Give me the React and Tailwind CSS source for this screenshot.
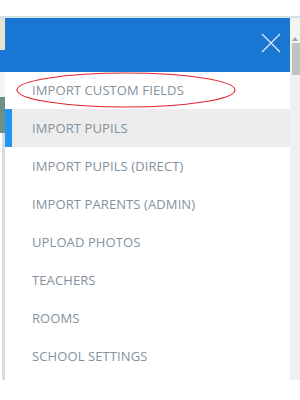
import React from "react";

const items = [
  "IMPORT CUSTOM FIELDS",
  "IMPORT PUPILS",
  "IMPORT PUPILS (DIRECT)",
  "IMPORT PARENTS (ADMIN)",
  "UPLOAD PHOTOS",
  "TEACHERS",
  "ROOMS",
  "SCHOOL SETTINGS",
];

export default function App() {
  return (
    <div className="relative w-[300px] h-[400px] bg-white overflow-hidden" style={{ fontFamily: '"Open Sans", sans-serif' }}>
      <div className="h-[16px]" />
      <div className="h-[2px] bg-[#cfe4e7]" />
      <div className="flex h-[362px]">
        {/* left strip */}
        <div className="w-[5px] flex flex-col">
          <div className="h-[32px] bg-[#e7e3d2]" />
          <div className="h-[22px] bg-[#1976d2]" />
          <div className="h-[25px] bg-[#f4f4f4]" />
          <div className="h-[36px] bg-[#6e8e89]" />
          <div className="flex-1 flex">
            <div className="w-[2px] bg-white" />
            <div className="flex-1 bg-[#dcdcdc]" />
          </div>
        </div>
        {/* panel */}
        <div className="w-[285px] flex flex-col bg-white">
          <div className="h-[54px] bg-[#1976d2] flex items-center justify-end pr-[8px]">
            <svg width="22" height="22" viewBox="0 0 22 22" className="mb-[4px]">
              <path d="M2 2 L20 20 M20 2 L2 20" stroke="#d6e6f7" strokeWidth="1.4" fill="none" />
            </svg>
          </div>
          {items.map((t, i) => (
            <div
              key={t}
              className={
                "relative flex items-center pl-[27px] pt-[1px] text-[13px] text-[#84929d] tracking-[0.1px] " +
                (i === 0 ? "h-[37px] " : "h-[38px] ") +
                (i === 1 ? "bg-[#ececec]" : "")
              }
            >
              {i === 1 && <div className="absolute left-0 top-0 bottom-0 w-[7px] bg-[#2196f3]" />}
              {t}
            </div>
          ))}
        </div>
        {/* scrollbar */}
        <div className="w-[10px] bg-[#f0f0f0] flex flex-col">
          <div className="h-[25px] flex items-end justify-center pb-[2px] bg-[#f3f3f3]">
            <svg width="6" height="4" viewBox="0 0 6 4">
              <path d="M0 4 L3 0 L6 4 Z" fill="#a3a3a3" />
            </svg>
          </div>
          <div className="h-[32px] ml-[2px] bg-[#c1c1c1]" />
        </div>
      </div>
      {/* red ellipse annotation */}
      <svg className="absolute left-0 top-0" width="300" height="400" viewBox="0 0 300 400">
        <ellipse cx="126" cy="90" rx="109" ry="17" stroke="#e0222a" strokeWidth="1.1" fill="none" />
      </svg>
    </div>
  );
}
